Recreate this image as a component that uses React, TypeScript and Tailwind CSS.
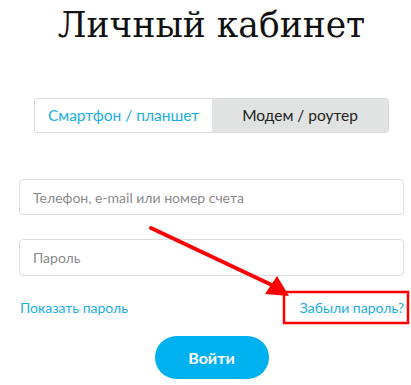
export default function App() {
  return (
    <div className="relative w-[411px] h-[385px] overflow-hidden bg-white font-['Lato',sans-serif]">
      <div className="ml-[19px] w-[385px] flex flex-col items-center">
        <h1 className="mt-[3px] h-[44px] text-[34.5px] leading-[44px] text-[#111] font-['DejaVu_Serif',serif]">
          Личный кабинет
        </h1>

        <div className="mt-[51px] flex w-[355px] h-[35px] rounded-[3px] border border-[#dcdcdc] overflow-hidden">
          <button className="w-[177px] bg-white text-[15.5px] text-[#19aee8]">
            Смартфон / планшет
          </button>
          <button className="flex-1 bg-[#e1e2e2] text-[15.5px] text-[#222]">
            Модем / роутер
          </button>
        </div>

        <input
          placeholder="Телефон, e-mail или номер счета"
          className="mt-[46px] w-full h-[36px] rounded-[4px] border border-[#dddddd] px-[13px] text-[14px] placeholder:text-[#8a8a8a] outline-none"
        />
        <input
          type="password"
          placeholder="Пароль"
          className="mt-[24px] w-full h-[37px] rounded-[4px] border border-[#dddddd] px-[13px] text-[14px] placeholder:text-[#8a8a8a] outline-none"
        />

        <div className="mt-[21px] w-full flex justify-between items-center text-[14px] text-[#19aee8]">
          <span className="pl-[1px]">Показать пароль</span>
          <span>Забыли пароль?</span>
        </div>

        <button className="mt-[18px] w-[114px] h-[43px] rounded-full bg-[#00b1ef] text-white text-[16px] font-bold">
          Войти
        </button>
      </div>

      <svg className="absolute left-0 top-0 pointer-events-none" width="411" height="385">
        <rect x="284" y="292" width="124" height="31" fill="none" stroke="#ff0000" strokeWidth="2.5" />
        <line x1="151" y1="228" x2="276" y2="287" stroke="#ff0000" strokeWidth="4" strokeLinecap="round" />
        <polygon points="289,296 265,294 277,276" fill="#ff0000" />
      </svg>
    </div>
  );
}
